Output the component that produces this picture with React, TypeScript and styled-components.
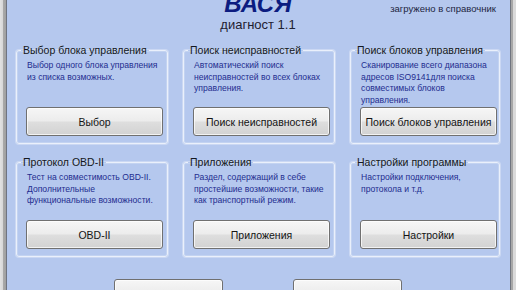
import * as React from 'react';
import styled, { createGlobalStyle } from 'styled-components';

const GlobalStyle = createGlobalStyle`
    html, body {
        margin: 0;
        padding: 0;
        overflow: hidden;
        background: #b5c8ee;
    }
`;

interface IGroup {
    title: string;
    lines: string[];
    button: string;
}

const groups: IGroup[] = [
    {
        title: 'Выбор блока управления',
        lines: ['Выбор одного блока управления', 'из списка возможных.'],
        button: 'Выбор',
    },
    {
        title: 'Поиск неисправностей',
        lines: ['Автоматический поиск', 'неисправностей во всех блоках', 'управления.'],
        button: 'Поиск неисправностей',
    },
    {
        title: 'Поиск блоков управления',
        lines: ['Сканирование всего диапазона', 'адресов ISO9141для поиска', 'совместимых блоков', 'управления.'],
        button: 'Поиск блоков управления',
    },
    {
        title: 'Протокол OBD-II',
        lines: ['Тест на совместимость OBD-II.', 'Дополнительные', 'функциональные возможности.'],
        button: 'OBD-II',
    },
    {
        title: 'Приложения',
        lines: ['Раздел, содержащий в себе', 'простейшие возможности, такие', 'как транспортный режим.'],
        button: 'Приложения',
    },
    {
        title: 'Настройки программы',
        lines: ['Настройки подключения,', 'протокола и т.д.'],
        button: 'Настройки',
    },
];

export default function App() {
    return (
        <>
            <GlobalStyle />
            <Window>
                <Frame side="left" />
                <Client>
                    <Header>
                        <span />
                        <TitleBlock>
                            <Title>ВАСЯ</Title>
                            <Subtitle>диагност 1.1</Subtitle>
                        </TitleBlock>
                        <Note>загружено в справочник</Note>
                    </Header>
                    <Groups>
                        {groups.map((g) => (
                            <Group key={g.title}>
                                <Legend>{g.title}</Legend>
                                <Desc>
                                    {g.lines.map((l) => (
                                        <div key={l}>{l}</div>
                                    ))}
                                </Desc>
                                <Button>{g.button}</Button>
                            </Group>
                        ))}
                    </Groups>
                    <Footer>
                        <Button small>О программе</Button>
                        <Button small>Выход</Button>
                    </Footer>
                </Client>
                <Frame side="right" />
            </Window>
        </>
    );
}

const Window = styled.div`
    display: flex;
    width: 516px;
    height: 290px;
    font-family: 'Liberation Sans', Arial, sans-serif;
`;

const Frame = styled.div<{ side: 'left' | 'right' }>`
    width: ${(p) => (p.side === 'left' ? '7px' : '6px')};
    flex-shrink: 0;
    background: ${(p) =>
        p.side === 'left'
            ? 'linear-gradient(to right, #e2e2e2 0, #d6d6d6 3px, #a9a9a9 3px, #a0a0a0 6px, #6f7480 6px)'
            : 'linear-gradient(to right, #70757f 0, #70757f 1px, #a7a7a7 1px, #a7a7a7 3px, #dadada 3px)'};
`;

const Client = styled.div`
    flex: 1;
    display: flex;
    flex-direction: column;
    background: #b5c8ee;
    padding: 0 10px 0 9px;
    overflow: hidden;
`;

const Header = styled.div`
    display: grid;
    grid-template-columns: 1fr auto 1fr;
    align-items: start;
`;

const TitleBlock = styled.div`
    display: flex;
    flex-direction: column;
    align-items: center;
    margin-top: -8px;
`;

const Title = styled.div`
    font-size: 24px;
    line-height: 24px;
    font-weight: bold;
    font-style: italic;
    color: #0c1c80;
`;

const Subtitle = styled.div`
    margin-top: 1px;
    font-size: 13px;
    line-height: 15px;
    color: #1e2030;
`;

const Note = styled.div`
    justify-self: end;
    margin-top: 3px;
    margin-right: 4px;
    font-size: 9.5px;
    line-height: 12px;
    color: #1c2440;
`;

const Groups = styled.div`
    display: grid;
    grid-template-columns: 152px 152px 150px;
    grid-template-rows: 100px 101px;
    column-gap: 15px;
    row-gap: 12px;
    margin-top: 12px;
`;

const Group = styled.fieldset`
    display: flex;
    flex-direction: column;
    margin: 0;
    min-width: 0;
    padding: 3px 5px 7px 10px;
    border: 1px solid #eaf0fb;
    border-radius: 3px;
    box-shadow: 0 0 0 1px rgba(255, 255, 255, 0.3), inset 0 0 0 1px rgba(255, 255, 255, 0.2);
`;

const Legend = styled.legend`
    padding: 0 2px;
    margin-left: -6px;
    font-size: 10.5px;
    line-height: 13px;
    color: #141820;
    white-space: nowrap;
`;

const Desc = styled.div`
    font-size: 8.6px;
    line-height: 11.7px;
    color: #1f2d8e;
    white-space: nowrap;
`;

const Button = styled.button<{ small?: boolean }>`
    margin-top: ${(p) => (p.small ? '0' : 'auto')};
    margin-left: -1px;
    width: ${(p) => (p.small ? '109px' : '137px')};
    height: 29px;
    flex-shrink: 0;
    padding: 0;
    border: 1px solid #707070;
    border-radius: 3px;
    box-shadow: inset 0 0 0 1px rgba(255, 255, 255, 0.7);
    background: linear-gradient(to bottom, #f6f6f6 0%, #ececec 48%, #dedede 52%, #d2d2d2 100%);
    font-family: 'Liberation Sans', Arial, sans-serif;
    font-size: 10.5px;
    color: #141414;
`;

const Footer = styled.div`
    display: flex;
    justify-content: center;
    gap: 71px;
    margin-top: 22px;
`;
